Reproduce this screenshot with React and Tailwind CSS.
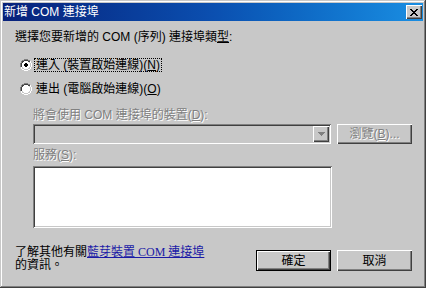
const face = "bg-[#c8c8c8]";
const font = { fontFamily: '"Liberation Sans", "Noto Sans CJK TC", sans-serif' };

function Radio({ checked }) {
  return (
    <svg width="12" height="12" viewBox="0 0 12 12" className="shrink-0">
      <path d="M4 0h4v1H4zM2 1h2v1H2zM8 1h2v1H8zM1 2h1v2H1zM0 4h1v4H0z" fill="#808080" />
      <path d="M4 1h4v1H4zM2 2h2v1H2zM8 2h2v1H8zM2 3h1v1H2zM1 4h1v4H1z" fill="#404040" />
      <path d="M10 2h1v2h-1zM11 4h1v4h-1zM10 8h1v2h-1zM8 10h2v1H8zM4 11h4v1H4zM2 10h2v1H2zM1 8h1v2H1z" fill="#ffffff" />
      <path d="M9 3h1v1H9zM10 4h1v4h-1zM9 8h1v1H9zM8 9h1v1H8zM4 10h4v1H4zM3 9h1v1H3zM2 8h1v1H2z" fill="#c8c8c8" />
      <path d="M4 2h4v1H4zM3 3h6v1H3zM2 4h8v4H2zM3 8h6v1H3zM4 9h4v1H4z" fill="#ffffff" />
      {checked && <path d="M5 4h2v1H5zM4 5h4v2H4zM5 7h2v1H5z" fill="#000" />}
    </svg>
  );
}

function Raised({ className = "", children, isDefault }) {
  return (
    <div
      className={`${face} flex items-center justify-center ${
        isDefault
          ? "border border-black shadow-[inset_1px_1px_#fff,inset_-1px_-1px_#404040,inset_-2px_-2px_#808080]"
          : "shadow-[inset_1px_1px_#fff,inset_-1px_-1px_#404040,inset_-2px_-2px_#808080]"
      } ${className}`}
    >
      {children}
    </div>
  );
}

const disabledText = "text-[#808080] [text-shadow:1px_1px_0_#fff]";
const sunken =
  "shadow-[inset_1px_1px_#808080,inset_-1px_-1px_#fff,inset_2px_2px_#404040,inset_-2px_-2px_#c8c8c8]";

export default function App() {
  return (
    <div
      className={`w-[426px] h-[288px] ${face} p-[3px] flex flex-col text-[12px] leading-[14px] text-black shadow-[inset_-1px_-1px_#404040,inset_1px_1px_#c8c8c8,inset_-2px_-2px_#808080,inset_2px_2px_#fff]`}
      style={font}
    >
      {/* title bar */}
      <div className="h-[18px] flex items-center justify-between pl-[1px] pr-[1px] bg-gradient-to-r from-[#08217a] via-[#0b4fb0] to-[#1a8ee2]">
        <span className="text-white text-[12px] leading-[14px]">新增 COM 連接埠</span>
        <Raised className="w-[16px] h-[14px]">
          <svg width="8" height="7" viewBox="0 0 8 7">
            <path d="M0 0h2v1H0zM6 0h2v1H6zM1 1h2v1H1zM5 1h2v1H5zM2 2h4v1H2zM3 3h2v1H3zM2 4h4v1H2zM1 5h2v1H1zM5 5h2v1H5zM0 6h2v1H0zM6 6h2v1H6z" fill="#000" />
          </svg>
        </Raised>
      </div>

      <div className="flex flex-col pl-[12px] pr-[11px]">
        <p className="mt-[9px]">
          選擇您要新增的 COM (序列) 連接埠類<span className="underline">型</span>:
        </p>

        <div className="mt-[14px] ml-[5px] h-[14px] flex items-center gap-[2px]">
          <Radio checked />
          <span className="border border-dotted border-black px-[1px] h-[14px] leading-[12px]">
            連入 (裝置啟始連線)(<span className="underline">N</span>)
          </span>
        </div>
        <div className="mt-[10px] ml-[5px] h-[14px] flex items-center gap-[4px]">
          <Radio />
          <span>
            連出 (電腦啟始連線)(<span className="underline">O</span>)
          </span>
        </div>

        <div className="ml-[18px] flex flex-col">
          <p className={`mt-[12px] ${disabledText}`}>
            將會使用 COM 連接埠的裝置(<span className="underline">D</span>):
          </p>
          <div className="mt-[2px] flex gap-[6px]">
            <div className={`w-[299px] h-[20px] ${face} ${sunken} flex justify-end items-center pr-[2px]`}>
              <Raised className="w-[16px] h-[16px]">
                <svg width="7" height="4" viewBox="0 0 7 4">
                  <path d="M0 0h7v1H0zM1 1h5v1H1zM2 2h3v1H2zM3 3h1v1H3z" fill="#808080" />
                </svg>
              </Raised>
            </div>
            <Raised className="w-[75px] h-[20px]">
              <span className={disabledText}>
                瀏覽(<span className="underline">B</span>)...
              </span>
            </Raised>
          </div>
          <p className={`mt-[4px] ${disabledText}`}>
            服務(<span className="underline">S</span>):
          </p>
          <div className={`mt-[4px] w-[299px] h-[62px] bg-white ${sunken}`} />
        </div>

        <div className="mt-[17px] flex justify-between items-start">
          <div className="mt-[1px] leading-[13px]" style={{ fontFamily: '"Liberation Serif", "Noto Sans CJK TC", serif' }}>
            <p>
              了解其他有關<span className="text-[#1a1aa6] underline">藍芽裝置 COM 連接埠</span>
            </p>
            <p>的資訊。</p>
          </div>
          <div className="mt-[5px] flex gap-[6px]">
            <Raised isDefault className="w-[75px] h-[21px]">
              確定
            </Raised>
            <Raised className="w-[75px] h-[21px]">取消</Raised>
          </div>
        </div>
      </div>
    </div>
  );
}
